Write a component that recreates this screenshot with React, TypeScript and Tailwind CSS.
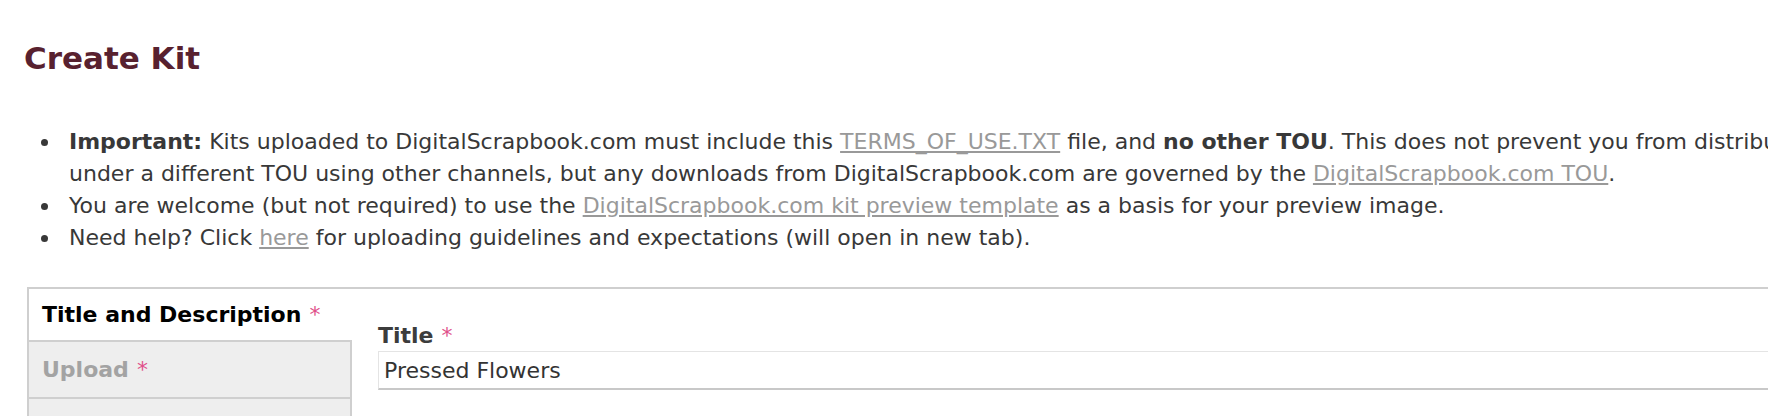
import React from "react";

const Star = () => <span className="ml-[8px] text-[#e0508a] font-normal">*</span>;

const Bullet = ({ children }: { children: React.ReactNode }) => (
  <li className="flex">
    <span className="w-[28px] shrink-0 flex items-start pt-[13px]">
      <span className="block w-[7px] h-[7px] rounded-full bg-[#383838]" />
    </span>
    <span className="flex-1">{children}</span>
  </li>
);

export default function App() {
  return (
    <div className="w-[1768px] h-[416px] overflow-hidden bg-white" style={{ fontFamily: '"DejaVu Sans", Verdana, sans-serif' }}>
      <div className="w-[2400px] pl-[24px] pt-[40px]">
        <h1 className="text-[31px] leading-[37px] font-bold text-[#58212f]">Create Kit</h1>
        <ul className="mt-[49px] pl-[17px] text-[22px] leading-[32px] text-[#383838]">
          <Bullet>
            <b>Important:</b> Kits uploaded to DigitalScrapbook.com must include this{" "}
            <a className="text-[#999999] underline">TERMS_OF_USE.TXT</a> file, and <b>no other TOU</b>. This does not prevent you from distributing your kit
            <br />
            under a different TOU using other channels, but any downloads from DigitalScrapbook.com are governed by the{" "}
            <a className="text-[#999999] underline">DigitalScrapbook.com TOU</a>.
          </Bullet>
          <Bullet>
            You are welcome (but not required) to use the{" "}
            <a className="text-[#999999] underline">DigitalScrapbook.com kit preview template</a> as a basis for your preview image.
          </Bullet>
          <Bullet>
            Need help? Click <a className="text-[#999999] underline">here</a> for uploading guidelines and expectations (will open in new tab).
          </Bullet>
        </ul>
        <div className="mt-[33px] ml-[3px] flex border-2 border-[#cfcfcf] h-[200px]">
          <div className="w-[323px] flex flex-col">
            <div className="h-[53px] flex items-center pl-[13px] bg-white border-b-2 border-[#cfcfcf] text-[22px] font-bold text-black">
              <span>Title and Description</span>
              <Star />
            </div>
            <div className="h-[57px] flex items-center pl-[13px] bg-[#eeeeee] border-b-2 border-r-2 border-[#cfcfcf] text-[22px] font-bold text-[#a3a3a3]">
              <span>Upload</span>
              <Star />
            </div>
            <div className="flex-1 bg-[#eeeeee] border-r-2 border-[#cfcfcf]"></div>
          </div>
          <div className="flex-1 pl-[26px] pt-[34px]">
            <div className="flex text-[22px] leading-[26px] font-bold text-[#3c3c3c]">
              <span>Title</span>
              <Star />
            </div>
            <div className="mt-[2px] h-[39px] flex items-center pl-[5px] border border-[#e4e4e4] border-b-2 border-b-[#c8c8c8] text-[22px] text-[#333333]">
              Pressed Flowers
            </div>
          </div>
        </div>
      </div>
    </div>
  );
}
